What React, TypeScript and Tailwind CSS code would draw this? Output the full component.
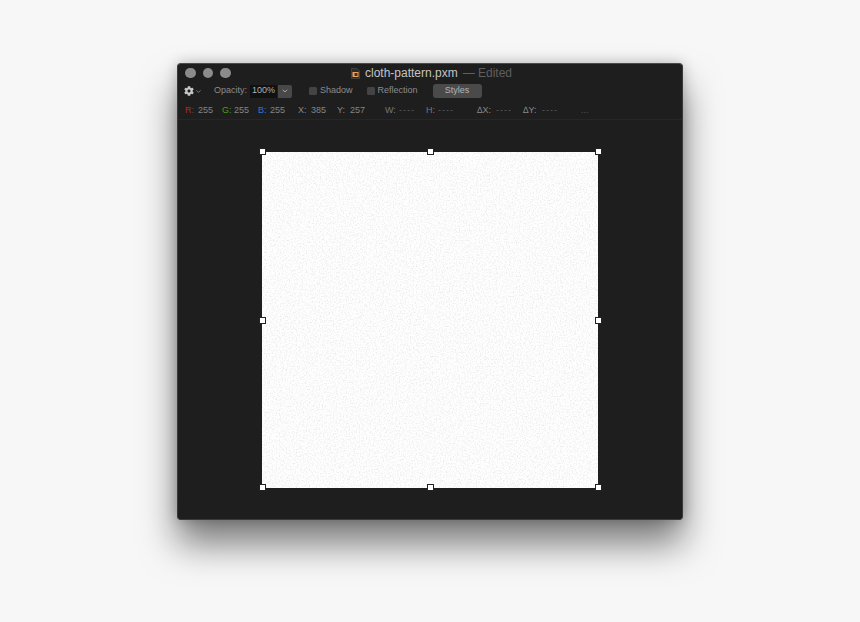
import React from "react";
import { FaCog } from "react-icons/fa";
import { ChevronDown } from "lucide-react";

const font = { fontFamily: '"Liberation Sans", Arial, sans-serif' };

const Handle = ({ className }: { className: string }) => (
  <span className={`absolute w-[7px] h-[7px] bg-white border border-[#222] ${className}`} />
);

const Check = ({ label, className }: { label: string; className: string }) => (
  <div className={`flex items-center ${className}`}>
    <span className="w-[8px] h-[8px] rounded-[1.5px] bg-[#444]" />
    <span className="ml-[3px] text-[9px] text-[#8c8c8c]">{label}</span>
  </div>
);

// label + value in the info row, widths come from the reference
const Info = ({ label, value, color, labelW, w }: { label: string; value: string; color: string; labelW: string; w: string }) => (
  <div className={`flex items-center shrink-0 ${w}`}>
    <span className={`${labelW} ${color}`}>{label}</span>
    <span className={value === "----" ? "text-[#5c5c5c] tracking-[1px]" : "text-[#858585]"}>{value}</span>
  </div>
);

const FileIcon = () => (
  <svg width="9" height="11" viewBox="0 0 9 11" className="mr-[5px]">
    <path d="M0.5 0.5H6L8.5 3V10.5H0.5Z" fill="#2b2b2b" stroke="#555" strokeWidth="0.6" />
    <rect x="1.5" y="4" width="6" height="5" fill="#e9a25c" />
    <rect x="3.5" y="5" width="3" height="3" fill="#5a2a14" />
  </svg>
);

export default function App() {
  return (
    <div className="min-h-[622px] bg-[#f7f7f7] flex justify-center pt-[63px] overflow-hidden" style={font}>
      <div className="w-[506px] h-[457px] bg-[#1e1e1e] rounded-[4px] border border-[#3a3a3a] border-t-[#4a4a4a] shadow-[0_24px_36px_rgba(0,0,0,0.5),0_0_14px_rgba(0,0,0,0.22)] flex flex-col">
        <div className="h-[18px] flex items-center pl-[7px] pr-[8px] shrink-0">
          <div className="flex-1 flex gap-[7px]">
            <span className="w-[10.5px] h-[10.5px] rounded-full bg-[#8b8b8b]" />
            <span className="w-[10.5px] h-[10.5px] rounded-full bg-[#8b8b8b]" />
            <span className="w-[10.5px] h-[10.5px] rounded-full bg-[#8b8b8b]" />
          </div>
          <div className="flex items-center text-[12px] leading-none ml-[4px]">
            <FileIcon />
            <span className="text-[#c4c4c4]">cloth-pattern.pxm</span>
            <span className="text-[#5f5f5f] ml-[5px]">— Edited</span>
          </div>
          <div className="flex-1" />
        </div>

        <div className="h-[18px] flex items-center pl-[6px] shrink-0 text-[9px] text-[#8c8c8c]">
          <FaCog className="text-[#c8c8c8]" size={10} />
          <ChevronDown className="text-[#999] ml-[1px]" size={7} strokeWidth={2.5} />
          <span className="ml-[12px]">Opacity:</span>
          <span className="ml-[3px] w-[27px] h-[13px] bg-[#111] text-[#b0b0b0] flex items-center justify-center">100%</span>
          <span className="ml-[1px] w-[14px] h-[13px] bg-[#484848] rounded-r-[2px] flex items-center justify-center">
            <ChevronDown className="text-[#bbb]" size={8} strokeWidth={2.5} />
          </span>
          <Check label="Shadow" className="ml-[17px]" />
          <Check label="Reflection" className="ml-[14px]" />
          <button className="ml-[15px] w-[49px] h-[14px] rounded-[3px] bg-[#4a4a4a] text-[#b4b4b4] text-[9px]">Styles</button>
        </div>

        <div className="h-[20px] flex items-center pl-[7px] pt-[2px] shrink-0 text-[9px] border-b border-[#262626]">
          <Info label="R:" value="255" color="text-[#a5322a]" labelW="w-[13px]" w="w-[37px]" />
          <Info label="G:" value="255" color="text-[#4e9a1c]" labelW="w-[12px]" w="w-[36px]" />
          <Info label="B:" value="255" color="text-[#2f78c0]" labelW="w-[12px]" w="w-[40px]" />
          <Info label="X:" value="385" color="text-[#888]" labelW="w-[13px]" w="w-[39px]" />
          <Info label="Y:" value="257" color="text-[#888]" labelW="w-[13px]" w="w-[48px]" />
          <Info label="W:" value="----" color="text-[#777]" labelW="w-[14px]" w="w-[41px]" />
          <Info label="H:" value="----" color="text-[#777]" labelW="w-[12px]" w="w-[51px]" />
          <Info label="∆X:" value="----" color="text-[#888]" labelW="w-[19px]" w="w-[46px]" />
          <Info label="∆Y:" value="----" color="text-[#888]" labelW="w-[19px]" w="w-[58px]" />
          <span className="text-[#555]">...</span>
        </div>

        <div className="flex-1 flex justify-center pt-[32px]">
          <div className="relative w-[336px] h-[336px] bg-white">
            <svg className="absolute inset-0 w-full h-full">
              <filter id="cloth" x="0" y="0" width="100%" height="100%">
                <feTurbulence type="fractalNoise" baseFrequency="0.7" numOctaves="2" seed="4" />
                <feColorMatrix type="matrix" values="0 0 0 0 0.76  0 0 0 0 0.76  0 0 0 0 0.76  1.7 0 0 0 -0.72" />
              </filter>
              <rect width="100%" height="100%" filter="url(#cloth)" />
            </svg>
            <Handle className="-left-[3px] -top-[4px]" />
            <Handle className="left-[165px] -top-[4px]" />
            <Handle className="-right-[4px] -top-[4px]" />
            <Handle className="-left-[3px] top-[165px]" />
            <Handle className="-right-[4px] top-[165px]" />
            <Handle className="-left-[3px] -bottom-[3px]" />
            <Handle className="left-[165px] -bottom-[3px]" />
            <Handle className="-right-[4px] -bottom-[3px]" />
          </div>
        </div>
      </div>
    </div>
  );
}
